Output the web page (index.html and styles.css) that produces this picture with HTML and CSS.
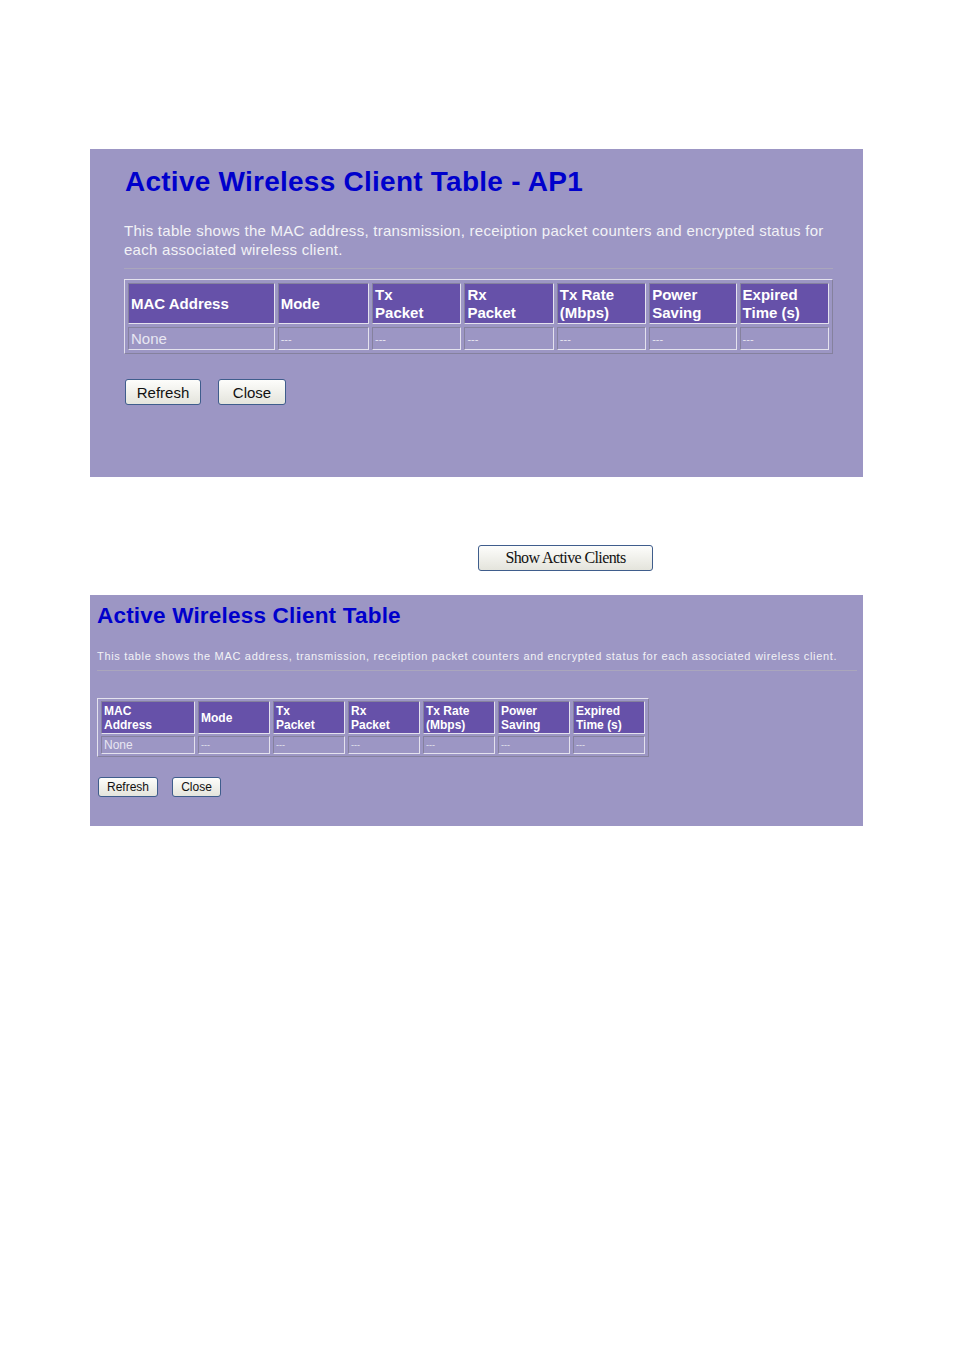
FILE: index.html
```html
<!DOCTYPE html>
<html>
<head>
<meta charset="utf-8">
<link rel="stylesheet" href="styles.css">
</head>
<body>
<div class="page">
  <section class="panel panel-lg">
    <h1 class="title">Active Wireless Client Table - AP1</h1>
    <p class="desc">This table shows the MAC address, transmission, receiption packet counters and encrypted status for<br>each associated wireless client.</p>
    <div class="rule"></div>
    <table class="clients">
      <colgroup>
        <col class="c1"><col class="c2"><col class="c3"><col class="c4"><col class="c5"><col class="c6"><col class="c7">
      </colgroup>
      <tr class="head">
        <th>MAC Address</th><th>Mode</th><th>Tx<br>Packet</th><th>Rx<br>Packet</th><th>Tx Rate<br>(Mbps)</th><th>Power<br>Saving</th><th>Expired<br>Time (s)</th>
      </tr>
      <tr class="data">
        <td class="none">None</td><td>---</td><td>---</td><td>---</td><td>---</td><td>---</td><td>---</td>
      </tr>
    </table>
    <div class="buttons">
      <button class="btn btn-refresh">Refresh</button>
      <button class="btn btn-close">Close</button>
    </div>
  </section>

  <div class="show-row">
    <button class="show-btn">Show Active Clients</button>
  </div>

  <section class="panel panel-sm">
    <h1 class="title">Active Wireless Client Table</h1>
    <p class="desc">This table shows the MAC address, transmission, receiption packet counters and encrypted status for each associated wireless client.</p>
    <div class="rule"></div>
    <table class="clients">
      <colgroup>
        <col class="c1"><col class="c2"><col class="c3"><col class="c4"><col class="c5"><col class="c6"><col class="c7">
      </colgroup>
      <tr class="head">
        <th>MAC<br>Address</th><th>Mode</th><th>Tx<br>Packet</th><th>Rx<br>Packet</th><th>Tx Rate<br>(Mbps)</th><th>Power<br>Saving</th><th>Expired<br>Time (s)</th>
      </tr>
      <tr class="data">
        <td class="none">None</td><td>---</td><td>---</td><td>---</td><td>---</td><td>---</td><td>---</td>
      </tr>
    </table>
    <div class="buttons">
      <button class="btn btn-refresh">Refresh</button>
      <button class="btn btn-close">Close</button>
    </div>
  </section>
</div>
</body>
</html>
```

FILE: styles.css
```css
html, body {
  margin: 0;
  padding: 0;
  background: #ffffff;
}

.page {
  padding: 149px 0 0 90px;
  font-family: "Liberation Sans", Arial, sans-serif;
}

.panel {
  width: 773px;
  box-sizing: border-box;
  background: #9c96c4;
}

.title {
  margin: 0;
  font-weight: bold;
  color: #0000cc;
}

.desc {
  margin: 0;
  color: #f2f2f6;
}

.rule {
  height: 1px;
  background: #aaa6bc;
}

.clients {
  border-collapse: separate;
  border-spacing: 3px;
  border: 1px solid;
  border-color: #e4e2ee #85819e #85819e #e4e2ee;
  table-layout: fixed;
}

.clients th,
.clients td {
  border: 1px solid;
  border-color: #85819e #e4e2ee #e4e2ee #85819e;
  text-align: left;
  vertical-align: middle;
  padding: 0 0 0 2px;
}

.clients th {
  background: #6651a9;
  color: #ffffff;
  font-weight: bold;
}

.clients td {
  color: #e8e6f2;
}

.buttons {
  display: flex;
}

.btn {
  font-family: "Liberation Sans", Arial, sans-serif;
  color: #111111;
  background: linear-gradient(#fdfdfb, #e4e4dc);
  border: 1px solid #3f5d8c;
  border-radius: 3px;
  padding: 0;
  box-sizing: border-box;
}

/* large panel */
.panel-lg {
  height: 328px;
  padding: 17px 30px 0 34px;
}
.panel-lg .title {
  font-size: 28px;
  line-height: 32px;
  padding-left: 1px;
  letter-spacing: 0.25px;
}
.panel-lg .desc {
  margin-top: 23px;
  font-size: 15px;
  line-height: 19px;
  letter-spacing: 0.27px;
}
.panel-lg .rule {
  margin-top: 9px;
  width: 709px;
}
.panel-lg .clients {
  margin-top: 10px;
  width: 709px;
}
.panel-lg .c1 { width: 146px; }
.panel-lg .c2 { width: 91px; }
.panel-lg .c3 { width: 89px; }
.panel-lg .c4 { width: 89px; }
.panel-lg .c5 { width: 89px; }
.panel-lg .c6 { width: 87px; }
.panel-lg .c7 { width: 89px; }
.panel-lg .clients th {
  height: 39px;
  font-size: 15px;
  line-height: 18px;
}
.panel-lg .clients td {
  height: 21px;
  font-size: 11px;
  line-height: 14px;
}
.panel-lg .clients td.none {
  font-size: 15px;
}
.panel-lg .buttons {
  margin-top: 25px;
  gap: 17px;
}
.panel-lg .btn {
  height: 26px;
  font-size: 15px;
}
.panel-lg .btn-refresh { width: 76px; margin-left: 1px; }
.panel-lg .btn-close { width: 68px; }

/* show button */
.show-row {
  height: 118px;
  box-sizing: border-box;
  padding: 68px 0 0 388px;
}
.show-btn {
  display: block;
  width: 175px;
  height: 26px;
  font-family: "Liberation Serif", "Times New Roman", serif;
  font-size: 16px;
  letter-spacing: -0.6px;
  color: #111111;
  background: linear-gradient(#fdfdfb, #e4e4dc);
  border: 1px solid #3f5d8c;
  border-radius: 3px;
  padding: 0;
}

/* small panel */
.panel-sm {
  height: 231px;
  padding: 8px 6px 0 7px;
}
.panel-sm .title {
  font-size: 22.5px;
  line-height: 26px;
  letter-spacing: 0.2px;
}
.panel-sm .desc {
  margin-top: 20px;
  font-size: 11px;
  line-height: 14px;
  letter-spacing: 0.68px;
}
.panel-sm .rule {
  margin-top: 7px;
  width: 760px;
}
.panel-sm .clients {
  margin-top: 27px;
  border-spacing: 3px 2px;
}
.panel-sm .c1 { width: 94px; }
.panel-sm .c2 { width: 72px; }
.panel-sm .c3 { width: 72px; }
.panel-sm .c4 { width: 72px; }
.panel-sm .c5 { width: 72px; }
.panel-sm .c6 { width: 72px; }
.panel-sm .c7 { width: 72px; }
.panel-sm .clients th {
  height: 31px;
  font-size: 12px;
  line-height: 14px;
}
.panel-sm .clients td {
  height: 16px;
  font-size: 9px;
  line-height: 12px;
}
.panel-sm .clients td.none {
  font-size: 12px;
}
.panel-sm .buttons {
  margin-top: 20px;
  gap: 14px;
}
.panel-sm .btn {
  height: 20px;
  font-size: 12px;
}
.panel-sm .btn-refresh { width: 60px; margin-left: 1px; }
.panel-sm .btn-close { width: 49px; }
```
